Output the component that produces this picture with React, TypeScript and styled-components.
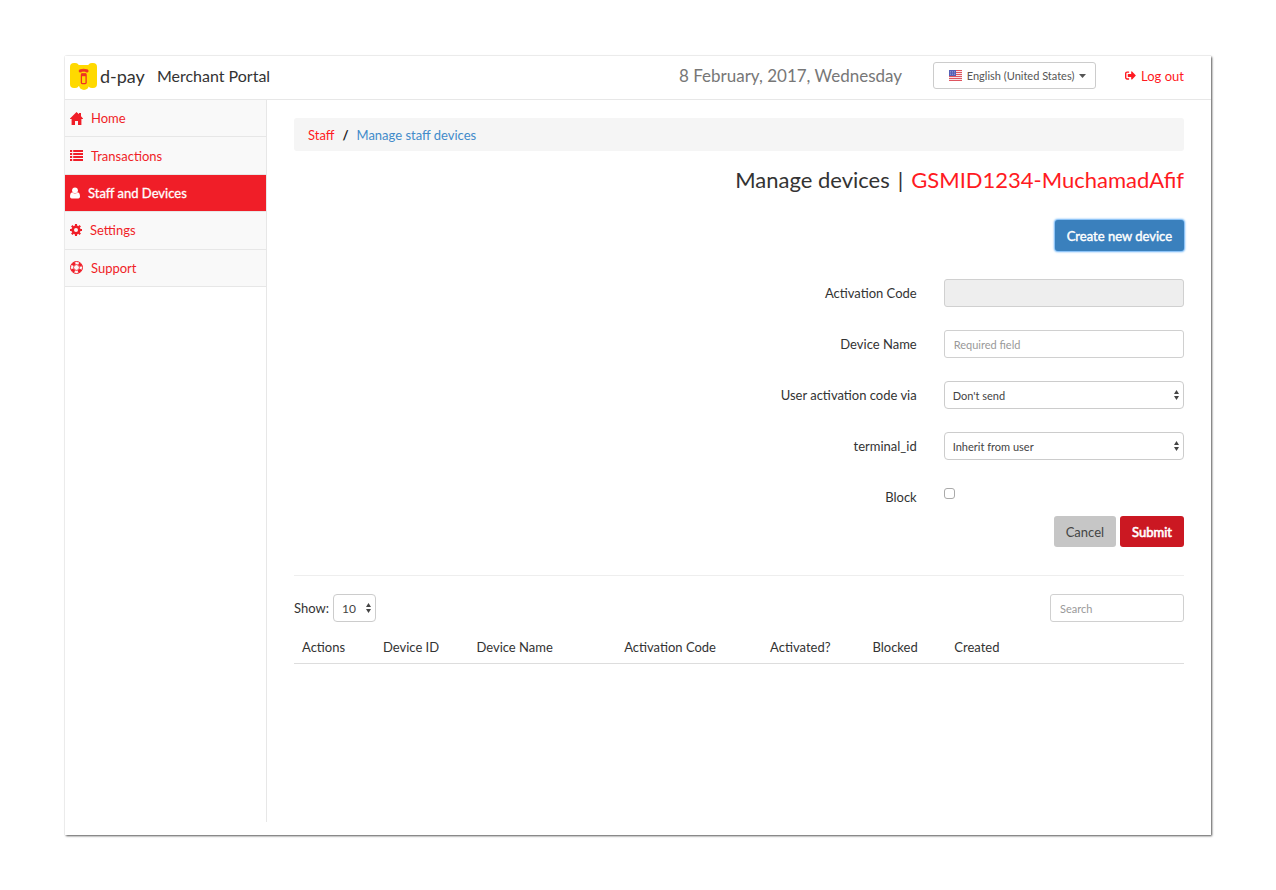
import React from "react";
import styled, { createGlobalStyle } from "styled-components";
import { FaSignOutAlt } from "react-icons/fa";

const GlobalStyle = createGlobalStyle`
  *, *::before, *::after { box-sizing: border-box; }
  body {
    margin: 0;
    background: #fff;
    color: #333;
    font-family: Lato, "Liberation Sans", sans-serif;
    font-size: 13px;
    line-height: 18px;
  }
  button, input, select { font-family: inherit; color: inherit; }
  a { text-decoration: none; }
`;

const Page = styled.div`
  display: flex;
  min-height: 100vh;
  padding: 56px 65px 55px;
`;

const Card = styled.div`
  flex: 1;
  min-width: 0;
  display: flex;
  flex-direction: column;
  background: #fff;
  box-shadow: 0 0 1px rgba(0, 0, 0, 0.2), 1px 1px 2px rgba(0, 0, 0, 0.65);
`;

const Header = styled.header`
  display: flex;
  align-items: center;
  height: 44px;
  padding: 0 27px 4px 5px;
  border-bottom: 1px solid #e7e7e7;
`;

const Brand = styled.a`
  display: flex;
  align-items: center;
  color: #333;
  font-size: 16px;
`;

const BrandName = styled.span`
  margin: 0 12px 0 3px;
  font-size: 18px;
  line-height: 22px;
`;

const Today = styled.time`
  margin-left: auto;
  color: #777;
  font-size: 17px;
`;

const LanguageButton = styled.button`
  display: flex;
  align-items: center;
  justify-content: space-between;
  width: 163px;
  height: 27px;
  margin: 0 29px 0 31px;
  padding: 0 9px 0 15px;
  background: #fff;
  border: 1px solid #ccc;
  border-radius: 3px;
  color: #555;
  font-size: 11px;
`;

const LogoutLink = styled.a`
  display: flex;
  align-items: center;
  gap: 5px;
  color: #ff1a22;
`;

const Body = styled.div`
  flex: 1;
  display: flex;
  padding-bottom: 13px;
`;

const Sidebar = styled.aside`
  width: 202px;
  flex-shrink: 0;
  border-right: 1px solid #e7e7e7;
`;

const Nav = styled.nav`
  display: flex;
  flex-direction: column;
  height: 187px;
`;

const NavItem = styled.a<{ $active?: boolean }>`
  flex: 1;
  display: flex;
  align-items: center;
  gap: 8px;
  padding-left: 5px;
  border-bottom: 1px solid #e7e7e7;
  background: ${(p) => (p.$active ? "#f01e28" : "#f9f9f9")};
  color: ${(p) => (p.$active ? "#fff" : "#f01e28")};
  -webkit-text-stroke: ${(p) => (p.$active ? "0.3px" : "0")};
`;

const Main = styled.main`
  flex: 1;
  min-width: 0;
  padding: 18px 27px 0;
`;

const Breadcrumb = styled.nav`
  display: flex;
  gap: 8px;
  padding: 8px 14px 7px;
  border-radius: 3px;
  background: #f5f5f5;
`;

const Separator = styled.span`
  color: #222;
  font-weight: 700;
`;

const Crumb = styled.a<{ $current?: boolean }>`
  color: ${(p) => (p.$current ? "#428bca" : "#ff1a22")};
`;

const Title = styled.h1`
  display: flex;
  justify-content: flex-end;
  gap: 8px;
  margin: 14px 0 25px;
  font-size: 22px;
  line-height: 30px;
  font-weight: 400;
`;

const TitleName = styled.span`
  color: #ff1a22;
`;

const Actions = styled.div`
  display: flex;
  justify-content: flex-end;
  gap: 4px;
`;

const tones = {
  primary: "background: #3a80bd; color: #fff; box-shadow: 0 0 2px 1px #66b0f5; -webkit-text-stroke: 0.4px;",
  neutral: "background: #c6c6c6; color: #444;",
  submit: "background: #cb1822; color: #fff; -webkit-text-stroke: 0.6px;",
};

const Button = styled.button<{ $tone: keyof typeof tones }>`
  height: 31px;
  padding: 0 12px;
  border: 0;
  border-radius: 3px;
  font-size: 13px;
  ${(p) => tones[p.$tone]}
`;

const Form = styled.form`
  padding-bottom: 28px;
  border-bottom: 1px solid #eee;
`;

const Fields = styled.div`
  display: grid;
  grid-template-columns: 1fr 27%;
  column-gap: 27px;
  row-gap: 23px;
  align-items: center;
  margin: 28px 0 5px;

  label { text-align: right; }
`;

const TextInput = styled.input`
  width: 100%;
  height: 28px;
  padding: 0 9px;
  border: 1px solid #d0d0d0;
  border-radius: 3px;
  background: #fff;
  color: #555;
  font-size: 11px;

  &::placeholder { color: #999; }
  &:disabled { background: #eee; }
`;

const CheckCell = styled.div`
  display: flex;
  height: 28px;
  padding-top: 5px;
`;

const Checkbox = styled.input`
  appearance: none;
  width: 11px;
  height: 11px;
  margin: 0;
  border: 1px solid #aaa;
  border-radius: 3px;
  background: #fff;
`;

const SelectBox = styled.div<{ $width?: string }>`
  position: relative;
  width: ${(p) => p.$width ?? "100%"};

  svg {
    position: absolute;
    right: 5px;
    top: 9px;
    pointer-events: none;
  }
`;

const Select = styled.select<{ $size?: number }>`
  appearance: none;
  display: block;
  width: 100%;
  height: 28px;
  padding: 0 8px;
  border: 1px solid #ccc;
  border-radius: 4px;
  background: #fff;
  color: #444;
  font-size: ${(p) => p.$size ?? 11}px;
`;

const TableBar = styled.div`
  display: flex;
  align-items: center;
  gap: 4px;
  padding-top: 18px;
`;

const SearchBox = styled.div`
  width: 134px;
  margin-left: auto;
`;

const Table = styled.table`
  width: 100%;
  margin-top: 9px;
  table-layout: fixed;
  border-collapse: collapse;

  th {
    padding: 7px 8px;
    border-bottom: 1px solid #ddd;
    text-align: left;
    font-weight: 400;
  }
`;

const Logo = () => (
  <svg width="27" height="28" viewBox="0 0 27 28" aria-hidden="true">
    <rect x="0" y="1" width="9" height="25" rx="4" fill="#ffd900" />
    <rect x="18" y="1" width="9" height="25" rx="4" fill="#ffd900" />
    <rect x="4" y="3" width="19" height="21" fill="#ffd900" />
    <rect x="9" y="3" width="10" height="25" rx="5" fill="#ffd900" />
    <path d="M9.300 10V8Q13.500 6.400 18 8V10H15.800L15.300 9.200H12L11.500 10z" fill="#ef3123" stroke="#ef3123" strokeWidth="0.800" />
    <rect x="11.400" y="12" width="4.700" height="9.600" rx="0.800" fill="none" stroke="#ef3123" strokeWidth="1.300" />
    <path d="M11.500 11.500h4.500v2.700h-4.500z" fill="#ef3123" />
  </svg>
);

const HomeIcon = () => (
  <svg width="13" height="13" viewBox="0 0 13 13" fill="currentColor" aria-hidden="true">
    <path d="M6.500 0L9 2.300V1h2v3.200L13 6.500v.6h-1.600V13H8V9H5v4H1.600V7.100H0v-.6z" />
  </svg>
);

const ListIcon = () => (
  <svg width="13" height="11" viewBox="0 0 13 11" fill="currentColor" aria-hidden="true">
    <path d="M0 0h2.200v1.900H0zM3.200 0H13v1.900H3.200zM0 3h2.200v1.900H0zM3.200 3H13v1.900H3.200zM0 6h2.200v1.900H0zM3.200 6H13v1.900H3.200zM0 9h2.200v1.900H0zM3.200 9H13v1.900H3.200z" />
  </svg>
);

const UserIcon = () => (
  <svg width="10" height="12" viewBox="0 0 10 12" fill="currentColor" aria-hidden="true">
    <circle cx="5" cy="3.300" r="2.900" />
    <path d="M2.300 5.200Q5 8 7.700 5.200Q10 5.700 10 9.600Q10 11.500 8.300 11.500H1.700Q0 11.500 0 9.600Q0 5.700 2.300 5.200z" />
  </svg>
);

const CogIcon = () => (
  <svg width="12" height="12" viewBox="0 0 12 12" fill="none" stroke="currentColor" aria-hidden="true">
    <circle cx="6" cy="6" r="3.300" strokeWidth="2.600" />
    <path d="M6 0v2M6 10v2M0 6h2M10 6h2M1.800 1.800l1.400 1.400M8.800 8.800l1.400 1.400M10.200 1.800L8.800 3.200M3.200 8.800l-1.400 1.400" strokeWidth="2.100" />
  </svg>
);

const SupportIcon = () => (
  <svg width="13" height="13" viewBox="0 0 13 13" fill="none" stroke="currentColor" aria-hidden="true">
    <circle cx="6.500" cy="6.500" r="6" strokeWidth="1" />
    <circle cx="6.500" cy="6.500" r="2.900" strokeWidth="0.900" />
    <circle cx="6.500" cy="6.500" r="4.500" strokeWidth="2.600" strokeDasharray="3.535 3.535" strokeDashoffset="-1.767" />
  </svg>
);

const Flag = () => (
  <svg width="13" height="11" viewBox="0 0 13 11" aria-hidden="true">
    <rect width="13" height="11" fill="#f7e4e6" />
    <path d="M0 .5h13M0 2.500h13M0 4.500h13M0 6.500h13M0 8.500h13M0 10.500h13" stroke="#df5560" />
    <rect width="7" height="6" fill="#5560b5" />
    <path d="M1 1.500h5M1 3h5M1 4.500h5" stroke="#a9afe0" strokeWidth="0.600" strokeDasharray="1 1" />
  </svg>
);

const Caret = () => (
  <svg width="7" height="4" viewBox="0 0 7 4" fill="#555" aria-hidden="true">
    <path d="M0 0h7L3.500 4z" />
  </svg>
);

const Arrows = () => (
  <svg width="5" height="10" viewBox="0 0 5 10" fill="#444" aria-hidden="true">
    <path d="M0 4L2.500 0 5 4zM0 6h5L2.500 10z" />
  </svg>
);

const columns: [string, string][] = [
  ["Actions", "9.1%"],
  ["Device ID", "10.5%"],
  ["Device Name", "16.6%"],
  ["Activation Code", "16.4%"],
  ["Activated?", "11.5%"],
  ["Blocked", "9.2%"],
  ["Created", "26.7%"],
];

export default function App() {
  return (
    <Page>
      <GlobalStyle />
      <Card>
        <Header>
          <Brand href="#">
            <Logo />
            <BrandName>d-pay</BrandName>
            Merchant Portal
          </Brand>
          <Today dateTime="2017-02-08">8 February, 2017, Wednesday</Today>
          <LanguageButton type="button" aria-haspopup="listbox">
            <Flag />
            English (United States)
            <Caret />
          </LanguageButton>
          <LogoutLink href="#">
            <FaSignOutAlt size={11} aria-hidden="true" />
            Log out
          </LogoutLink>
        </Header>
        <Body>
          <Sidebar>
            <Nav aria-label="Main">
              <NavItem href="#"><HomeIcon />Home</NavItem>
              <NavItem href="#"><ListIcon />Transactions</NavItem>
              <NavItem href="#" $active aria-current="page"><UserIcon />Staff and Devices</NavItem>
              <NavItem href="#"><CogIcon />Settings</NavItem>
              <NavItem href="#"><SupportIcon />Support</NavItem>
            </Nav>
          </Sidebar>
          <Main>
            <Breadcrumb aria-label="Breadcrumb">
              <Crumb href="#">Staff</Crumb>
              <Separator>/</Separator>
              <Crumb href="#" $current>Manage staff devices</Crumb>
            </Breadcrumb>
            <Title>
              <span>Manage devices</span>
              <span>|</span>
              <TitleName>GSMID1234-MuchamadAfif</TitleName>
            </Title>
            <Actions>
              <Button type="button" $tone="primary">Create new device</Button>
            </Actions>
            <Form onSubmit={(e) => e.preventDefault()}>
              <Fields>
                <label htmlFor="code">Activation Code</label>
                <TextInput id="code" disabled />
                <label htmlFor="name">Device Name</label>
                <TextInput id="name" placeholder="Required field" />
                <label htmlFor="via">User activation code via</label>
                <SelectBox>
                  <Select id="via"><option>Don't send</option></Select>
                  <Arrows />
                </SelectBox>
                <label htmlFor="terminal">terminal_id</label>
                <SelectBox>
                  <Select id="terminal"><option>Inherit from user</option></Select>
                  <Arrows />
                </SelectBox>
                <label htmlFor="block">Block</label>
                <CheckCell><Checkbox id="block" type="checkbox" /></CheckCell>
              </Fields>
              <Actions>
                <Button type="button" $tone="neutral">Cancel</Button>
                <Button type="submit" $tone="submit">Submit</Button>
              </Actions>
            </Form>
            <TableBar>
              <label htmlFor="show">Show:</label>
              <SelectBox $width="43px">
                <Select id="show" $size={12}><option>10</option></Select>
                <Arrows />
              </SelectBox>
              <SearchBox>
                <TextInput type="search" placeholder="Search" aria-label="Search" />
              </SearchBox>
            </TableBar>
            <Table>
              <colgroup>
                {columns.map(([name, width]) => <col key={name} style={{ width }} />)}
              </colgroup>
              <thead>
                <tr>{columns.map(([name]) => <th key={name} scope="col">{name}</th>)}</tr>
              </thead>
            </Table>
          </Main>
        </Body>
      </Card>
    </Page>
  );
}
